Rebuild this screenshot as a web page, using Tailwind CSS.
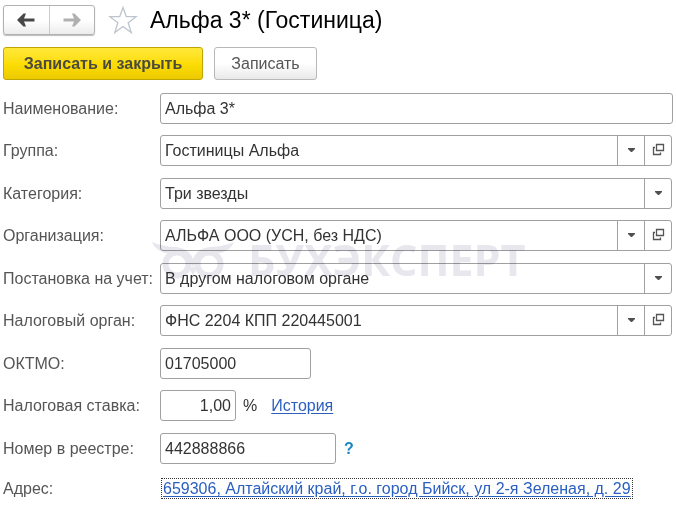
<!DOCTYPE html>
<html lang="ru">
<head>
<meta charset="utf-8">
<meta name="viewport" content="width=device-width, initial-scale=1">
<title>Альфа 3* (Гостиница)</title>
<script src="https://cdn.jsdelivr.net/npm/@tailwindcss/browser@4"></script>
</head>
<body class="bg-white font-['Liberation_Sans',Arial,sans-serif] text-[16px] leading-5 text-[#333]">
<svg class="hidden">
  <symbol id="caret" viewBox="0 0 26 29"><path d="M10 12h7v1l-3 3h-1l-3-3z" fill="#505050"/></symbol>
  <symbol id="open" viewBox="0 0 26 29"><path d="M11.500 8.500h7v6h-7z M10 11.500h-1.500v7h7v-2" fill="none" stroke="#555" stroke-width="1.300"/></symbol>
</svg>
<main class="relative px-[3px] pt-[5px]">
  <header class="flex items-center">
    <div class="flex h-[30px] w-[92px] overflow-hidden rounded-[3px] border border-[#b2b2b2] bg-linear-to-b from-white from-50% to-[#ececec] shadow-[0_1px_1px_#bbb]">
      <button type="button" aria-label="Назад" class="flex flex-1 items-center justify-center border-r border-[#ccc]"><svg class="h-[14px] w-[18px]" viewBox="0 0 18 14"><path d="M0 7l6.500-6.500h2.500L7 5.500h10.500v3H7l2 5H6.500z" fill="#484848"/></svg></button>
      <button type="button" aria-label="Вперед" class="flex flex-1 items-center justify-center"><svg class="h-[14px] w-[18px]" viewBox="0 0 18 14"><path d="M18 7l-6.500-6.500H9L11 5.500H.5v3H11l-2 5h2.500z" fill="#b0b0b0"/></svg></button>
    </div>
    <button type="button" aria-label="В избранное" class="ml-[13px]"><svg class="h-[30px] w-[30px]" viewBox="0 0 30 30"><path d="M15 2.500l3.300 9.200h9.700l-7.800 6 3 9.800-8.200-6-8.200 6 3-9.800-7.800-6h9.700z" fill="none" stroke="#bcc4cd" stroke-width="1.300"/></svg></button>
    <h1 class="ml-3 text-[23px] leading-[30px] text-black">Альфа 3* (Гостиница)</h1>
  </header>

  <div class="mt-3 flex gap-[11px]">
    <button type="button" class="h-[33px] w-[200px] rounded-[3px] border border-[#c0a500] bg-linear-to-b from-[#ffe936] via-[#fddd05] to-[#ecca00] text-[16px] font-bold text-[#4a4a3e]">Записать и закрыть</button>
    <button type="button" class="h-[33px] w-[103px] rounded-[3px] border border-[#b8b8b8] bg-linear-to-b from-white from-50% to-[#e9e9e9] text-[16px] text-[#555]">Записать</button>
  </div>

  <form class="mt-[13px] flex flex-col gap-3">
    <div class="flex flex-col gap-[11px]">
      <div class="flex items-center">
        <label for="name" class="w-[157px] shrink-0 text-[#555]">Наименование:</label>
        <input id="name" type="text" value="Альфа 3*" class="h-[31px] min-w-0 flex-1 rounded-[3px] border border-[#a0a0a0] px-1">
      </div>
      <div class="flex items-center">
        <label for="group" class="w-[157px] shrink-0 text-[#555]">Группа:</label>
        <div class="mr-px flex h-[31px] min-w-0 flex-1 rounded-[3px] border border-[#a0a0a0]">
          <div class="grid min-w-0 flex-1">
            <select id="group" class="col-start-1 row-start-1 appearance-none px-1"><option>Гостиницы Альфа</option></select>
            <svg class="pointer-events-none col-start-1 row-start-1 box-content h-[29px] w-[26px] justify-self-end border-l border-[#a0a0a0]"><use href="#caret"/></svg>
          </div>
          <button type="button" aria-label="Открыть группу" class="border-l border-[#a0a0a0]"><svg class="h-[29px] w-[26px]"><use href="#open"/></svg></button>
        </div>
      </div>
    </div>

    <div class="flex flex-col gap-[11px]">
      <div class="flex items-center">
        <label for="category" class="w-[157px] shrink-0 text-[#555]">Категория:</label>
        <div class="mr-px grid h-[31px] min-w-0 flex-1 rounded-[3px] border border-[#a0a0a0]">
          <select id="category" class="col-start-1 row-start-1 appearance-none px-1"><option>Три звезды</option></select>
          <svg class="pointer-events-none col-start-1 row-start-1 box-content h-[29px] w-[26px] justify-self-end border-l border-[#a0a0a0]"><use href="#caret"/></svg>
        </div>
      </div>
      <div class="flex items-center">
        <label for="org" class="w-[157px] shrink-0 text-[#555]">Организация:</label>
        <div class="mr-px flex h-[31px] min-w-0 flex-1 rounded-[3px] border border-[#a0a0a0]">
          <div class="grid min-w-0 flex-1">
            <select id="org" class="col-start-1 row-start-1 appearance-none px-1"><option>АЛЬФА ООО (УСН, без НДС)</option></select>
            <svg class="pointer-events-none col-start-1 row-start-1 box-content h-[29px] w-[26px] justify-self-end border-l border-[#a0a0a0]"><use href="#caret"/></svg>
          </div>
          <button type="button" aria-label="Открыть организацию" class="border-l border-[#a0a0a0]"><svg class="h-[29px] w-[26px]"><use href="#open"/></svg></button>
        </div>
      </div>
    </div>

    <div class="flex flex-col gap-[11px]">
      <div class="flex items-center">
        <label for="registration" class="w-[157px] shrink-0 whitespace-nowrap text-[#555]">Постановка на учет:</label>
        <div class="mr-px grid h-[31px] min-w-0 flex-1 rounded-[3px] border border-[#a0a0a0]">
          <select id="registration" class="col-start-1 row-start-1 appearance-none px-1"><option>В другом налоговом органе</option></select>
          <svg class="pointer-events-none col-start-1 row-start-1 box-content h-[29px] w-[26px] justify-self-end border-l border-[#a0a0a0]"><use href="#caret"/></svg>
        </div>
      </div>
      <div class="flex items-center">
        <label for="tax-office" class="w-[157px] shrink-0 text-[#555]">Налоговый орган:</label>
        <div class="mr-px flex h-[31px] min-w-0 flex-1 rounded-[3px] border border-[#a0a0a0]">
          <div class="grid min-w-0 flex-1">
            <select id="tax-office" class="col-start-1 row-start-1 appearance-none px-1"><option>ФНС 2204 КПП 220445001</option></select>
            <svg class="pointer-events-none col-start-1 row-start-1 box-content h-[29px] w-[26px] justify-self-end border-l border-[#a0a0a0]"><use href="#caret"/></svg>
          </div>
          <button type="button" aria-label="Открыть налоговый орган" class="border-l border-[#a0a0a0]"><svg class="h-[29px] w-[26px]"><use href="#open"/></svg></button>
        </div>
      </div>
    </div>

    <div class="flex flex-col gap-[11px]">
      <div class="flex items-center">
        <label for="oktmo" class="w-[157px] shrink-0 text-[#555]">ОКТМО:</label>
        <input id="oktmo" type="text" value="01705000" class="h-[31px] w-[151px] rounded-[3px] border border-[#a0a0a0] px-1">
      </div>
      <div class="flex items-center">
        <label for="rate" class="w-[157px] shrink-0 text-[#555]">Налоговая ставка:</label>
        <input id="rate" type="text" value="1,00" class="h-[31px] w-[76px] rounded-[3px] border border-[#a0a0a0] px-1 text-right">
        <span class="ml-[7px]">%</span>
        <a href="#history" class="ml-[14px] text-[#2a5fc0] underline underline-offset-2">История</a>
      </div>
    </div>

    <div class="flex flex-col gap-[14px]">
      <div class="flex items-center">
        <label for="registry" class="w-[157px] shrink-0 text-[#555]">Номер в реестре:</label>
        <input id="registry" type="text" value="442888866" class="h-[31px] w-[176px] rounded-[3px] border border-[#a0a0a0] px-1">
        <button type="button" aria-label="Справка" class="ml-2 font-bold text-[#1a86c8]">?</button>
      </div>
      <div class="flex items-center">
        <span class="w-[158px] shrink-0 text-[#555]">Адрес:</span>
        <a href="#address" class="border border-dotted border-[#333] px-px leading-[19px] whitespace-nowrap text-[#2a5fc0] underline underline-offset-2">659306, Алтайский край, г.о. город Бийск, ул 2-я Зеленая, д. 29</a>
      </div>
    </div>
  </form>

  <div aria-hidden="true" class="pointer-events-none absolute top-[238px] left-[152px] flex items-center gap-[14px] mix-blend-multiply">
    <svg class="h-[40px] w-[82px]" viewBox="0 0 82 40"><g fill="#e8e7ed"><path d="M0 2q12 5 24 5 13 1 17 12 4-11 17-12 12 0 24-5-3 8-13 11-16-2-24 9l-4 5-4-5q-8-11-24-9Q3 10 0 2zM36 27h10l-5 8z"/><circle cx="25" cy="24" r="11.500" fill="none" stroke="#e8e7ed" stroke-width="6"/><circle cx="57" cy="24" r="11.500" fill="none" stroke="#e8e7ed" stroke-width="6"/></g></svg>
    <span class="font-['Open_Sans','Noto_Sans',sans-serif] text-[43px] leading-[44px] font-bold text-[#e8e7ed]">БУХЭКСПЕРТ</span>
  </div>
</main>
</body>
</html>
